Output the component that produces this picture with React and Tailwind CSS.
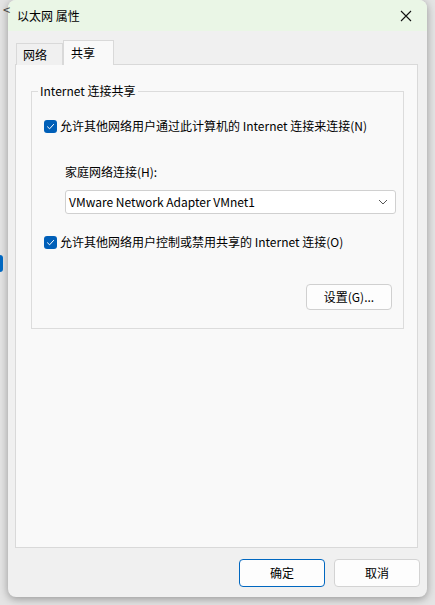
import React from "react";

const font = { fontFamily: '"Noto Sans CJK SC", "Noto Sans", sans-serif' };

function Check() {
  return (
    <span className="flex h-[13px] w-[13px] shrink-0 items-center justify-center rounded-[3px] bg-[#005fb8]">
      <svg width="9" height="9" viewBox="0 0 9 9" fill="none">
        <path d="M1.5 4.8 L3.6 6.8 L7.6 2.4" stroke="white" strokeWidth="1" strokeLinecap="round" strokeLinejoin="round" />
      </svg>
    </span>
  );
}

function Btn({ children, primary, className = "" }) {
  return (
    <div
      className={
        "flex h-[28px] w-[86px] items-center justify-center rounded-[4px] border bg-[#fdfdfd] text-[12px] text-black " +
        (primary ? "border-[#0067c0] " : "border-[#d3d3d3] ") +
        className
      }
    >
      {children}
    </div>
  );
}

export default function App() {
  return (
    <div className="relative h-[605px] w-[435px] overflow-hidden bg-[#e4e4e4]" style={font}>
      {/* background window remnants */}
      <div className="absolute left-[3px] top-[3px] text-[13px] leading-none text-[#444]">&lt;</div>
      <div className="absolute left-0 top-[255px] h-[17px] w-[3px] rounded-r-sm bg-[#0067c0]" />

      <div className="ml-[8px] flex h-[597px] w-[419px] flex-col overflow-hidden rounded-[8px] bg-[#f0f0f0] shadow-[0_2px_8px_rgba(0,0,0,0.35)]">
        {/* title bar */}
        <div className="flex h-[31px] shrink-0 items-center justify-between bg-[#eaf6e6] pl-[9px] pr-[15px]">
          <span className="text-[12px] text-black">以太网 属性</span>
          <svg width="12" height="12" viewBox="0 0 12 12">
            <path d="M1 1 L11 11 M11 1 L1 11" stroke="#111" strokeWidth="1.1" />
          </svg>
        </div>

        {/* body */}
        <div className="flex flex-1 flex-col pl-[7px] pr-[9px] pt-[9px]">
          {/* tabs */}
          <div className="relative z-10 flex h-[24px] items-end pl-[1px]">
            <div className="mb-[-1px] flex h-[22px] w-[47px] items-center border border-b-0 border-[#d9d9d9] bg-[#f0f0f0] pl-[6px] text-[12px] text-black">
              网络
            </div>
            <div className="mb-[-1px] flex h-[25px] w-[51px] items-center border border-b-0 border-[#d9d9d9] bg-[#f9f9f9] pl-[7px] text-[12px] text-black">
              共享
            </div>
          </div>

          {/* panel */}
          <div className="h-[484px] border border-[#d9d9d9] bg-[#f9f9f9] pl-[15px] pr-[13px] pt-[18px]">
            <fieldset className="h-[246px] border border-[#dcdcdc] pl-[12px] pr-[7px]">
              <legend className="-ml-[6px] px-[2px] text-[12px] leading-[16px] text-black">Internet 连接共享</legend>

              <div className="mt-[19px] flex items-center gap-[3px]">
                <Check />
                <span className="text-[12px] leading-[16px] text-black">允许其他网络用户通过此计算机的 Internet 连接来连接(N)</span>
              </div>

              <div className="ml-[21px] mt-[30px] text-[12px] leading-[16px] text-black">家庭网络连接(H):</div>

              <div className="ml-[21px] mt-[10px] flex h-[24px] items-center justify-between rounded-[3px] border border-[#d0d0d0] bg-white pl-[3px] pr-[7px]">
                <span className="text-[12px] text-black">VMware Network Adapter VMnet1</span>
                <svg width="10" height="6" viewBox="0 0 10 6" fill="none">
                  <path d="M1 1 L5 5 L9 1" stroke="#555" strokeWidth="1" />
                </svg>
              </div>

              <div className="mt-[20px] flex items-center gap-[3px]">
                <Check />
                <span className="text-[12px] leading-[16px] text-black">允许其他网络用户控制或禁用共享的 Internet 连接(O)</span>
              </div>

              <div className="mr-[4px] mt-[34px] flex justify-end">
                <div className="flex h-[26px] w-[86px] items-center justify-center rounded-[4px] border border-[#d0d0d0] bg-[#fdfdfd] text-[12px] text-black">
                  设置(G)...
                </div>
              </div>
            </fieldset>
          </div>

          {/* buttons */}
          <div className="-mr-[2px] mt-[11px] flex justify-end gap-[9px]">
            <Btn primary>确定</Btn>
            <Btn>取消</Btn>
          </div>
        </div>
      </div>
    </div>
  );
}
